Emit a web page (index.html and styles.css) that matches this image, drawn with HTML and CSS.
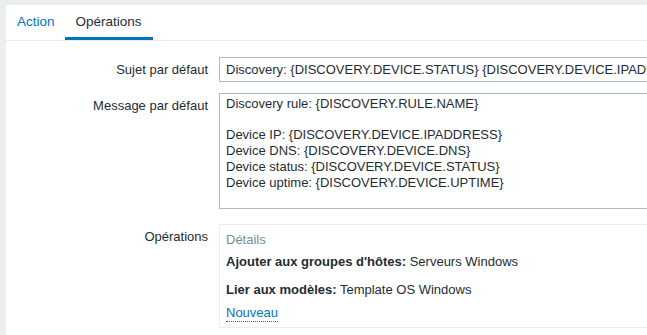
FILE: index.html
```html
<!DOCTYPE html>
<html lang="fr">
<head>
  <meta charset="UTF-8"/>
  <title>Actions de découverte</title>
  <link rel="stylesheet" href="styles.css">
</head>
<body>
  <div class="panel">
    <ul class="tabs">
      <li><a href="#">Action</a></li>
      <li class="active"><a href="#">Opérations</a></li>
    </ul>

    <div class="form">
      <div class="row">
        <label class="label">Sujet par défaut</label>
        <div class="field">
          <input class="input" type="text" value="Discovery: {DISCOVERY.DEVICE.STATUS} {DISCOVERY.DEVICE.IPADDRESS}">
        </div>
      </div>

      <div class="row">
        <label class="label">Message par défaut</label>
        <div class="field">
          <textarea class="textarea">Discovery rule: {DISCOVERY.RULE.NAME}

Device IP: {DISCOVERY.DEVICE.IPADDRESS}
Device DNS: {DISCOVERY.DEVICE.DNS}
Device status: {DISCOVERY.DEVICE.STATUS}
Device uptime: {DISCOVERY.DEVICE.UPTIME}

Device service name: {DISCOVERY.SERVICE.NAME}</textarea>
        </div>
      </div>

      <div class="row">
        <label class="label ops-label">Opérations</label>
        <div class="field">
          <div class="ops-box">
            <div class="ops-head">Détails</div>
            <div class="ops-line"><b>Ajouter aux groupes d'hôtes:</b> Serveurs Windows</div>
            <div class="ops-line second"><b>Lier aux modèles:</b> Template OS Windows</div>
            <a class="link" href="#">Nouveau</a>
          </div>
        </div>
      </div>
    </div>
  </div>
</body>
</html>
```

FILE: styles.css
```css
html, body { height: 100%; }
body {
  margin: 0;
  background: #ebeef0;
  font-family: "Liberation Sans", Arial, sans-serif;
  font-size: 13px;
  color: #1f2c33;
  overflow: hidden;
}
.panel {
  margin: 5px 0 0 6px;
  height: calc(100% - 5px);
  background: #fff;
  overflow: hidden;
}
.tabs {
  list-style: none;
  margin: 0;
  padding: 0 0 0 1px;
  display: flex;
  border-bottom: 1px solid #ebeef0;
  font-size: 13.5px;
}
.tabs li {
  padding: 0 10px;
  height: 32px;
  line-height: 34px;
  border-bottom: 3px solid transparent;
}
.tabs li.active { padding: 0 11px; }
.tabs li a {
  color: #0275b8;
  text-decoration: none;
}
.tabs li.active { border-bottom-color: #0275b8; }
.tabs li.active a { color: #1f2c33; }

.form { padding-top: 16px; }
.row {
  display: grid;
  grid-template-columns: 202px 1fr;
  column-gap: 11px;
  margin-bottom: 11px;
}
.field { min-width: 0; overflow: hidden; }
.label {
  text-align: right;
  padding-top: 5px;
  line-height: 16px;
}
.input {
  display: block;
  box-sizing: border-box;
  width: 700px;
  height: 25px;
  margin: 0;
  padding: 0 6px;
  border: 1px solid #acbbc2;
  font: inherit;
  color: inherit;
}
.textarea {
  display: block;
  box-sizing: border-box;
  width: 700px;
  height: 116px;
  margin: 0;
  padding: 2px 6px;
  border: 1px solid #acbbc2;
  font: inherit;
  line-height: 15.7px;
  color: inherit;
  resize: none;
  overflow: hidden;
}
.row:nth-child(2) { margin-bottom: 15px; }
.ops-label { padding-top: 5px; }
.ops-box {
  width: 700px;
  box-sizing: border-box;
  height: 104px;
  border: 1px solid #ebeef0;
  padding: 6px 6px 5px;
  line-height: 18px;
}
.ops-head { color: #768d99; }
.ops-line { margin-top: 4px; }
.ops-line.second { margin-top: 10px; }
.link {
  display: inline-block;
  margin-top: 6px;
  color: #0275b8;
  text-decoration: none;
  line-height: 16px;
  border-bottom: 1px dotted #0275b8;
}
```
